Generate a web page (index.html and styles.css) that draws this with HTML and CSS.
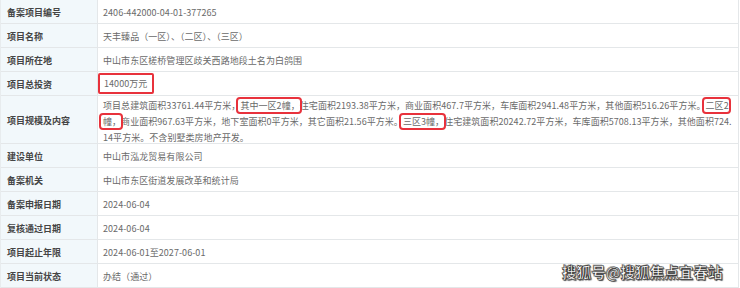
FILE: index.html
```html
<!DOCTYPE html>
<html lang="zh-CN">
<head>
<meta charset="utf-8">
<title>备案项目信息</title>
<link rel="stylesheet" href="styles.css">
</head>
<body>
<div class="page">
  <div class="table">
    <div class="label">备案项目编号</div>
    <div class="value">2406-442000-04-01-377265</div>

    <div class="label">项目名称</div>
    <div class="value">天丰臻品（一区）、（二区）、（三区）</div>

    <div class="label">项目所在地</div>
    <div class="value">中山市东区槎桥管理区歧关西路地段土名为白鸽围</div>

    <div class="label">项目总投资</div>
    <div class="value"><span class="mark-big">14000万元</span></div>

    <div class="label tall">项目规模及内容</div>
    <div class="value tall multi">
      <div class="line">项目总建筑面积33761.44平方米，<span class="mark">其中一区2幢，</span>住宅面积2193.38平方米，商业面积467.7平方米，车库面积2941.48平方米，其他面积516.26平方米。<span class="mark">二区2</span></div>
      <div class="line"><span class="mark">幢，</span>商业面积967.63平方米，地下室面积0平方米，其它面积21.56平方米。<span class="mark">三区3幢，</span>住宅建筑面积20242.72平方米，车库面积5708.13平方米，其他面积724.</div>
      <div class="line">14平方米。不含别墅类房地产开发。</div>
    </div>

    <div class="label">建设单位</div>
    <div class="value">中山市泓龙贸易有限公司</div>

    <div class="label">备案机关</div>
    <div class="value">中山市东区街道发展改革和统计局</div>

    <div class="label">备案申报日期</div>
    <div class="value">2024-06-04</div>

    <div class="label">复核通过日期</div>
    <div class="value">2024-06-04</div>

    <div class="label">项目起止年限</div>
    <div class="value">2024-06-01至2027-06-01</div>

    <div class="label">项目当前状态</div>
    <div class="value">办结（通过）</div>
  </div>
  <div class="watermark">搜狐号@搜狐焦点宜春站</div>
</div>
</body>
</html>
```

FILE: styles.css
```css
html, body {
  margin: 0;
  padding: 0;
  background: #ffffff;
}

.page {
  position: relative;
  width: 740px;
  height: 288px;
  overflow: hidden;
  font-family: "Noto Sans CJK SC", "Microsoft YaHei", sans-serif;
  font-size: 9px;
}

.table {
  display: grid;
  grid-template-columns: 97px 641px;
  grid-auto-rows: 24px;
  border-left: 1px solid #e8ecee;
  width: 739px;
}

.label,
.value {
  display: flex;
  align-items: center;
  border-bottom: 1px solid #e4e7e9;
  white-space: nowrap;
}

.label {
  background: #f2f8fb;
  color: #454545;
  font-weight: 700;
  padding-left: 6px;
  padding-top: 1px;
  border-right: 1px solid #e4e7e9;
}

.value {
  color: #6a6a6a;
  padding-left: 5px;
  padding-top: 1px;
  border-right: 1px solid #e4e7e9;
  letter-spacing: 0.05px;
}

.tall {
  grid-row: span 2;
}

.multi {
  flex-direction: column;
  align-items: flex-start;
  justify-content: center;
  line-height: 16px;
  padding-top: 5px;
}

.line {
  white-space: nowrap;
}

.mark {
  border-radius: 2px;
  outline: 2px solid #e8323c;
  outline-offset: 0.5px;
  padding-left: 2px;
  margin-left: -2px;
}

.mark-big {
  display: inline-flex;
  align-items: center;
  height: 17px;
  padding: 0 5px 0 4px;
  margin-left: -5px;
  margin-top: -1px;
  border: 2px solid #e8323c;
  border-radius: 2px;
}

.watermark {
  position: absolute;
  left: 562px;
  top: 261px;
  font-size: 14.6px;
  font-weight: 700;
  color: #ffffff;
  white-space: nowrap;
  -webkit-text-stroke: 0.6px #333333;
  text-shadow: 1px 1px 1px rgba(0, 0, 0, 0.7), -1px -1px 0 rgba(0, 0, 0, 0.35);
}
```
